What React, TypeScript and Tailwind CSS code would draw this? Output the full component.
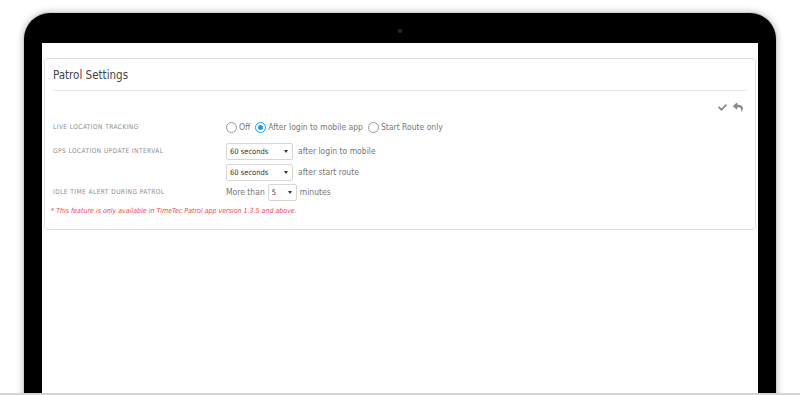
import { FaCheck, FaReply } from "react-icons/fa";

function Select({ value, width }: { value: string; width: string }) {
  return (
    <div
      className={`${width} h-[17px] flex items-center justify-between border border-[#d6d6d6] rounded-[2px] bg-white pl-[3px] pr-[4px] text-[7.5px] text-[#333]`}
    >
      <span>{value}</span>
      <span className="w-0 h-0 border-l-[2.5px] border-r-[2.5px] border-t-[3px] border-l-transparent border-r-transparent border-t-[#333]" />
    </div>
  );
}

function Radio({ checked, label }: { checked?: boolean; label: string }) {
  return (
    <label className="flex items-center gap-[2px]">
      <span
        className={`w-[11px] h-[11px] rounded-full border flex items-center justify-center ${
          checked ? "border-[#1e9be8]" : "border-[#9a9a9a]"
        }`}
      >
        {checked && <span className="w-[5px] h-[5px] rounded-full bg-[#1e9be8]" />}
      </span>
      <span>{label}</span>
    </label>
  );
}

export default function App() {
  return (
    <div
      className="w-[800px] h-[395px] bg-white overflow-hidden relative"
      style={{ fontFamily: '"DejaVu Sans Condensed", "Open Sans", sans-serif' }}
    >
      {/* laptop body */}
      <div className="absolute left-[24px] top-[13px] w-[752px] h-[420px] bg-black rounded-t-[26px] shadow-[0_0_5px_3px_rgba(0,0,0,0.15)] ring-1 ring-[#cfcfcf] flex flex-col px-[18px] pt-[30px]">
        <div className="absolute left-1/2 top-[16px] -translate-x-1/2 w-[4px] h-[4px] rounded-full bg-[#2a2a2a]" />

        {/* screen */}
        <div className="flex-1 bg-white px-[2px] pt-[15px]">
          <div className="border border-[#dedede] rounded-[3px] h-[172px] px-[8px]">
            <div className="pt-[8px] h-[32px] border-b border-[#e8e8e8] text-[11.5px] text-[#444]">
              Patrol Settings
            </div>

            <div className="flex justify-end items-center gap-[6px] pr-[4px] pt-[11px] h-[21px] text-[#8a8a8a]">
              <FaCheck size={9} />
              <FaReply size={10} />
            </div>

            <div className="mt-[8px] text-[8.5px] text-[#555]">
              <div className="flex items-center h-[15px]">
                <div className="w-[173px] text-[6.5px] tracking-[0.07em] text-[#8c8c8c] uppercase">
                  Live location tracking
                </div>
                <div className="flex items-center gap-[5px] text-[#777]">
                  <Radio label="Off" />
                  <Radio checked label="After login to mobile app" />
                  <Radio label="Start Route only" />
                </div>
              </div>

              <div className="flex items-center h-[21px] mt-[6px]">
                <div className="w-[173px] text-[6.5px] tracking-[0.07em] text-[#8c8c8c] uppercase">
                  GPS location update interval
                </div>
                <div className="flex items-center gap-[5px] text-[#777]">
                  <Select value="60 seconds" width="w-[67px]" />
                  <span>after login to mobile</span>
                </div>
              </div>

              <div className="flex items-center h-[21px]">
                <div className="w-[173px]" />
                <div className="flex items-center gap-[5px] text-[#777]">
                  <Select value="60 seconds" width="w-[67px]" />
                  <span>after start route</span>
                </div>
              </div>

              <div className="flex items-center h-[19px]">
                <div className="w-[173px] text-[6.5px] tracking-[0.07em] text-[#8c8c8c] uppercase">
                  Idle time alert during patrol
                </div>
                <div className="flex items-center gap-[3px] text-[#777]">
                  <span>More than</span>
                  <Select value="5" width="w-[29px]" />
                  <span>minutes</span>
                </div>
              </div>

              <div className="-ml-[2px] mt-[4px] text-[7px] italic text-[#f0474f]">
                * This feature is only available in TimeTec Patrol app version 1.3.5 and above.
              </div>
            </div>
          </div>
        </div>
      </div>
      <div className="absolute left-0 right-0 bottom-0 h-[2px] bg-[#d4d4d4]" />
    </div>
  );
}
